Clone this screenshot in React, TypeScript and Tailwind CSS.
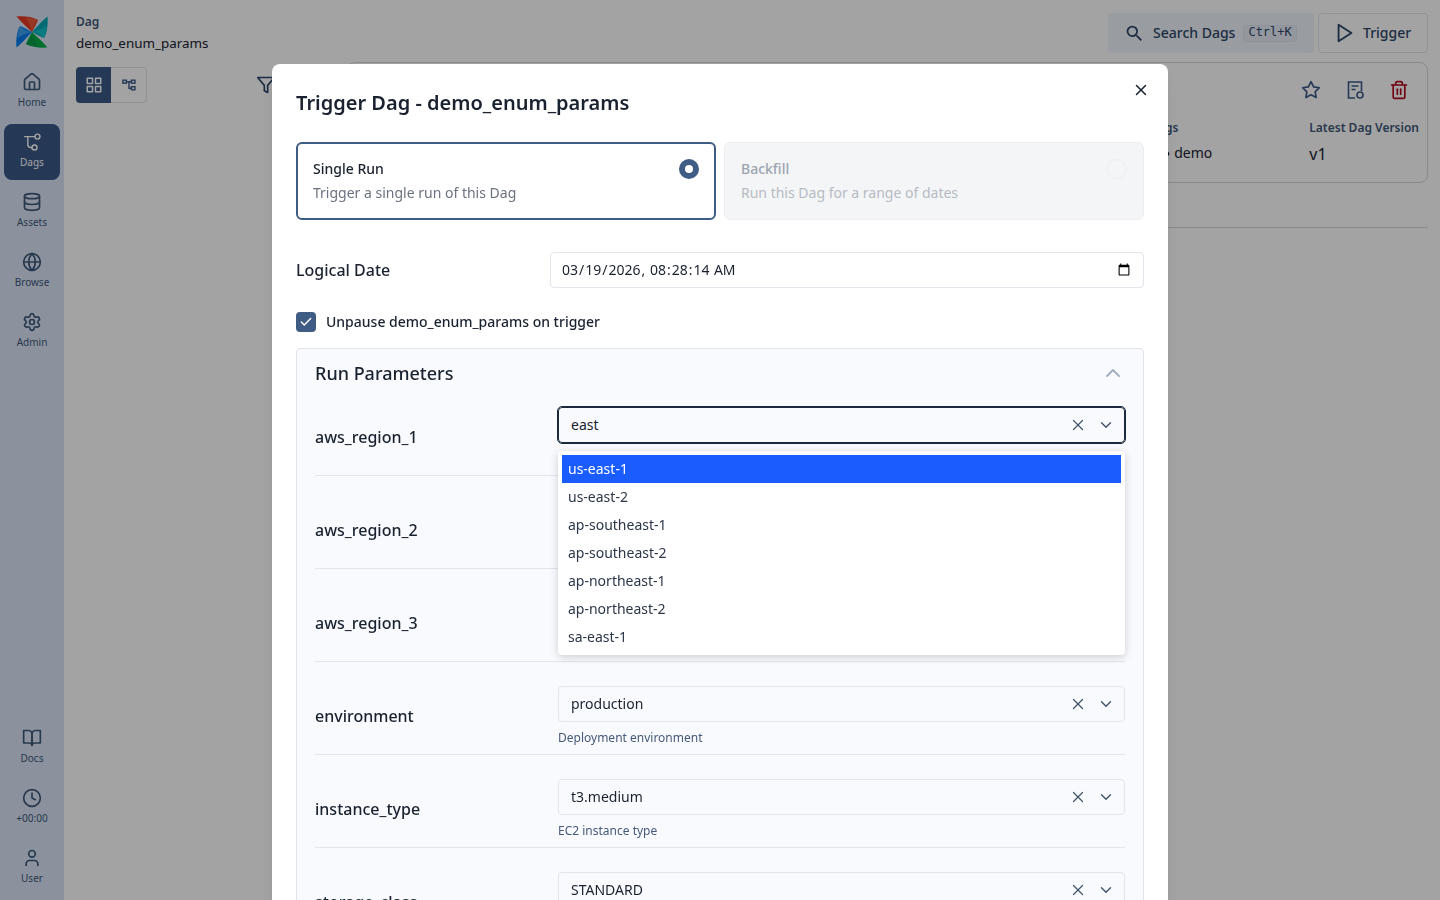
import { ChevronDown, ChevronUp, Clock, Database, Globe, House, Settings, Tag, Trash2, User, X, Check } from "lucide-react";
import { FiBookOpen, FiFilter, FiGrid, FiPlay, FiStar } from "react-icons/fi";
import { MdSearch } from "react-icons/md";

function Logo() {
  const blade = (outer: string, inner: string, angle: number) => (
    <g transform={`rotate(${angle} 16 16)`} key={angle}>
      <path d="M0.5 0.5 C8 0 16 0.5 22 4 C20.5 8 18 12 16 16 C11 11 5 6 0.5 0.5 Z" fill={outer} />
      <path d="M16 16 C17 11 18 8 22 4 C17 2 13 2 10 1.5 C13 6 15 11 16 16 Z" fill={inner} />
    </g>
  );
  return (
    <svg viewBox="0 0 32 32" className="w-8 h-8 block">
      {blade("#e43921", "#ee5a3a", 0)}
      {blade("#00a7b5", "#11c3c9", 90)}
      {blade("#00ad46", "#0a9a4a", 180)}
      {blade("#017cee", "#3fa0f0", 270)}
    </svg>
  );
}

function DagIcon() {
  return (
    <svg viewBox="0 0 24 24" className="w-5 h-5" fill="none" stroke="currentColor" strokeWidth="1.7" strokeLinecap="round">
      <path d="M3 5.5H15.5" />
      <path d="M7 5.5V15C7 17 8 18.5 10.5 18.5H12" />
      <circle cx="18.5" cy="5.5" r="3" />
      <circle cx="15" cy="18.5" r="3" />
    </svg>
  );
}

function TreeIcon() {
  return (
    <svg viewBox="0 0 16 16" className="w-[14px] h-[14px]" fill="none" stroke="currentColor" strokeWidth="1.6">
      <rect x="1" y="2.5" width="4" height="3.4" />
      <rect x="10.8" y="2.5" width="4" height="3.4" />
      <rect x="10.8" y="10" width="4" height="3.4" />
      <path d="M5 4.2H10.8M8 4.2V11.7H10.8" />
    </svg>
  );
}

function DocIcon() {
  return (
    <svg viewBox="0 0 20 20" className="w-5 h-5" fill="none" stroke="currentColor" strokeWidth="1.6">
      <path d="M10 18H3.5V2H16.5V11" />
      <path d="M6.5 6H13.5M6.5 9.5H10.5" />
      <circle cx="15" cy="15" r="3" />
    </svg>
  );
}

function NavItem({ icon, label, active }: { icon: React.ReactNode; label: string; active?: boolean }) {
  return (
    <div className={active ? "w-14 h-14 rounded-lg bg-[#3a5a88] text-white flex flex-col items-center" : "w-14 h-14 rounded-lg text-[#3f5878] flex flex-col items-center"}>
      <div className="h-5 mt-2 flex items-center justify-center">{icon}</div>
      <div className="text-[10px] leading-4 mt-[2px]">{label}</div>
    </div>
  );
}

function SelectBox({ value, focused }: { value: string; focused?: boolean }) {
  return (
    <div className={focused ? "h-9 rounded-[4px] bg-[#f9fafe] border border-[#1d2a3d] outline outline-1 outline-[#1d2a3d] flex items-center pl-3 pr-[9px] text-[#1a2230]" : "h-9 rounded-[4px] border border-[#e2e5ec] flex items-center pl-3 pr-[9px] text-[#1a2230]"}>
      <span className="text-sm flex-1">{value}</span>
      <X className="text-[#3e5269] w-[18px] h-[18px]" strokeWidth={1.6} />
      <ChevronDown className="text-[#3e5269] w-[18px] h-[18px] ml-[10px]" strokeWidth={1.8} />
    </div>
  );
}

function ParamRow({ label, value, hint, focused, first }: { label: string; value: string; hint?: string; focused?: boolean; first?: boolean }) {
  return (
    <div className={first ? "flex items-center border-b border-[#e2e5ec] pb-2" : "flex items-center border-b border-[#e2e5ec] pt-6 pb-2"}>
      <div className="w-[243px] text-base font-medium text-[#1a2230]">{label}</div>
      <div className="flex-1 relative">
        <SelectBox value={value} focused={focused} />
        <div className="h-4 text-xs leading-4 mt-2 text-[#45597a]">{hint}</div>
      </div>
    </div>
  );
}

const options = ["us-east-1", "us-east-2", "ap-southeast-1", "ap-southeast-2", "ap-northeast-1", "ap-northeast-2", "sa-east-1"];

export default function App() {
  return (
    <div className="h-screen overflow-hidden flex bg-white font-['Noto_Sans',sans-serif] text-[#1a2230]">
      <aside className="w-16 shrink-0 bg-[#d9e5f7] flex flex-col items-center">
        <div className="pt-4 pb-4"><Logo /></div>
        <div className="flex flex-col gap-1 flex-1">
          <NavItem icon={<House size={20} />} label="Home" />
          <NavItem active icon={<DagIcon />} label="Dags" />
          <NavItem icon={<Database size={20} />} label="Assets" />
          <NavItem icon={<Globe size={20} />} label="Browse" />
          <NavItem icon={<Settings size={20} />} label="Admin" />
        </div>
        <div className="flex flex-col gap-1 pb-1">
          <NavItem icon={<FiBookOpen size={20} />} label="Docs" />
          <NavItem icon={<Clock size={20} />} label="+00:00" />
          <NavItem icon={<User size={20} />} label="User" />
        </div>
      </aside>

      <main className="flex-1 min-w-0 px-3 pt-[13px]">
        <header className="flex justify-between h-10 mb-[9px]">
          <div>
            <div className="text-xs leading-4 font-semibold text-[#3f5878] pt-px">Dag</div>
            <div className="text-[13.4px] leading-5 mt-[3px]">demo_enum_params</div>
          </div>
          <div className="flex gap-1">
            <div className="w-[206px] h-10 rounded bg-[#f0f4fa] flex items-center pl-4 text-[#2d4668]">
              <MdSearch size={21} />
              <span className="text-sm font-medium ml-[8px]">Search Dags</span>
              <span className="ml-2 h-[17px] px-[4px] rounded-[3px] bg-[#e8eef8] border border-[#dfe7f3] font-['DejaVu_Sans_Mono',monospace] text-xs leading-[13px]">Ctrl+K</span>
            </div>
            <div className="w-[110px] h-10 rounded border border-[#e2e5ec] flex items-center pl-[15px] text-[#2d4668]">
              <FiPlay size={22} />
              <span className="text-sm font-medium ml-[7px]">Trigger</span>
            </div>
          </div>
        </header>
        <div className="flex">
          <div className="w-[271px] shrink-0 flex items-start pt-[5px]">
            <div className="w-[71px] h-9 rounded border border-[#dfe3ea] flex">
              <div className="w-[35px] -my-px -ml-px rounded-l bg-[#3a5a88] text-white flex items-center justify-center"><FiGrid size={18} /></div>
              <div className="flex-1 flex items-center justify-center text-[#3a5a88]"><TreeIcon /></div>
            </div>
            <FiFilter size={20} className="ml-[109px] mt-2 text-[#2d4668]" />
          </div>
          <div className="flex-1">
            <div className="h-[121px] rounded-lg border border-[#d5d8de] relative">
              <div className="flex justify-end gap-6 pt-[17px] pr-[18px] text-[#3a5a88]">
                <FiStar size={20} />
                <DocIcon />
                <Trash2 size={20} className="text-[#b3081f]" />
              </div>
              <div className="flex justify-end gap-[97px] mt-[20px] pr-2">
                <div>
                  <div className="text-xs leading-4 font-semibold text-[#3f5878]">Tags</div>
                  <div className="flex items-center gap-1 text-sm mt-[7px]"><Tag size={18} /> demo</div>
                </div>
                <div>
                  <div className="text-xs leading-4 font-semibold text-[#3f5878]">Latest Dag Version</div>
                  <div className="text-base mt-[6px]">v1</div>
                </div>
              </div>
            </div>
            <div className="border-b border-[#d5d8de] mt-[44px]" />
          </div>
        </div>
      </main>

      <div className="fixed inset-0 bg-black/[0.36] overflow-hidden flex justify-center pt-16">
        <div className="w-[896px] h-[1400px] bg-white rounded-lg relative p-6 shadow-lg">
          <h2 className="text-xl leading-[30px] font-semibold pb-6">Trigger Dag - demo_enum_params</h2>
          <button className="absolute right-[18px] top-[17px] text-[#1a2230]"><X size={18} strokeWidth={2} /></button>

          <div className="grid grid-cols-2 gap-2">
            <div className="h-[78px] rounded-md border-2 border-[#3f5c84] px-[15px] relative">
              <div className="text-sm leading-5 font-medium mt-[15px]">Single Run</div>
              <div className="text-sm leading-5 mt-1 text-[#6b7280]">Trigger a single run of this Dag</div>
              <div className="absolute right-[15px] top-[15px] w-5 h-5 rounded-full bg-[#3f5c84] flex items-center justify-center"><div className="w-2 h-2 rounded-full bg-white" /></div>
            </div>
            <div className="h-[78px] rounded-md border border-[#eceef1] bg-[#f4f5f7] px-4 relative">
              <div className="text-sm leading-5 font-medium mt-4 text-[#9ca3af]">Backfill</div>
              <div className="text-sm leading-5 mt-1 text-[#b6bbc3]">Run this Dag for a range of dates</div>
              <div className="absolute right-4 top-4 w-5 h-5 rounded-full border border-[#eceef1]" />
            </div>
          </div>

          <div className="flex items-center mt-8">
            <div className="w-[254px] text-base font-medium">Logical Date</div>
            <input type="datetime-local" onChange={() => {}} value="2026-03-19T08:28:14" step="1" className="flex-1 h-9 rounded-[4px] border border-[#e2e5ec] pl-[10px] pr-[10px] text-sm" />
          </div>

          <div className="flex items-center mt-6 gap-[10px]">
            <div className="w-5 h-5 rounded-[4px] bg-[#3f5c84] flex items-center justify-center text-white"><Check size={14} strokeWidth={2.5} /></div>
            <span className="text-sm font-medium">Unpause demo_enum_params on trigger</span>
          </div>

          <div className="mt-4 rounded-[4px] border border-[#e2e5ec] bg-[#f9fafe] px-[18px]">
            <div className="h-[58px] flex items-center justify-between pb-[10px]">
              <span className="text-lg font-medium">Run Parameters</span>
              <ChevronUp size={24} strokeWidth={1.8} className="text-[#a0aec0]" />
            </div>
            <div className="relative">
              <ParamRow first focused label="aws_region_1" value="east" />
              <ParamRow label="aws_region_2" value="" />
              <ParamRow label="aws_region_3" value="" />
              <ParamRow label="environment" value="production" hint="Deployment environment" />
              <ParamRow label="instance_type" value="t3.medium" hint="EC2 instance type" />
              <ParamRow label="storage_class" value="STANDARD" />
              <div className="absolute left-[243px] right-0 top-[44px] h-[204px] rounded-[4px] bg-white p-1 shadow-[0_2px_8px_rgba(0,0,0,0.18)]">
                {options.map((o, i) => (
                  <div key={o} className={i === 0 ? "h-7 px-[6px] text-sm leading-7 bg-[#1a5cff] text-white" : "h-7 px-[6px] text-sm leading-7 text-[#2b3648]"}>{o}</div>
                ))}
              </div>
            </div>
          </div>
        </div>
      </div>
    </div>
  );
}
